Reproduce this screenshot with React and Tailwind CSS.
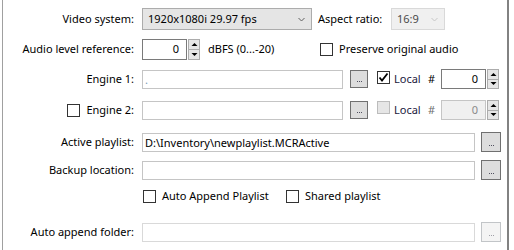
import React from "react";

const font = { fontFamily: '"Noto Sans", "Liberation Sans", sans-serif' };

function Label({ children, className = "" }) {
  return (
    <div className={`w-[132px] shrink-0 flex items-center justify-end pr-[1px] ${className}`}>
      {children}
    </div>
  );
}

function Check({ checked, disabled }) {
  return (
    <span
      className={`inline-flex w-[13px] h-[13px] shrink-0 items-center justify-center border ${
        disabled ? "bg-[#e6e6e6] border-[#bcbcbc]" : "bg-white border-[#333333]"
      }`}
    >
      {checked && (
        <svg width="11" height="11" viewBox="0 0 11 11">
          <path d="M1.5 5.5 L4 8.5 L9.5 1.5" fill="none" stroke="#000" strokeWidth="1.8" />
        </svg>
      )}
    </span>
  );
}

function TextBox({ w, value, muted, disabled }) {
  return (
    <div
      className={`h-[19px] border flex items-center px-[2px] leading-none ${
        disabled ? "border-[#d9d9d9]" : "border-[#c5c5c5]"
      } ${muted ? "text-[#7a9bb5]" : "text-black"}`}
      style={{ width: w }}
    >
      {value}
    </div>
  );
}

function Dots({ disabled, big }) {
  const dot = disabled ? "bg-[#a0a0a8]" : "bg-[#505060]";
  return (
    <div
      className={`shrink-0 flex items-end justify-center gap-[1px] pb-[5px] border ${
        big ? "w-[20px] h-[20px]" : "w-[18px] h-[18px]"
      } ${disabled ? "bg-[#f4f4f4] border-[#c2c5c8]" : "bg-[#dddddd] border-[#707070]"}`}
    >
      <span className={`w-[1px] h-[1px] ${dot}`} />
      <span className={`w-[1px] h-[1px] ${dot}`} />
      <span className={`w-[1px] h-[1px] ${dot}`} />
    </div>
  );
}

function Arrow({ up }) {
  return (
    <svg width="7" height="5" viewBox="0 0 7 5">
      {up ? <path d="M0.5 4 L3.5 1 L6.5 4 Z" fill="#000" /> : <path d="M0.5 1 L3.5 4 L6.5 1 Z" fill="#000" />}
    </svg>
  );
}

function Spin({ value, textW, disabled, h = 21 }) {
  return (
    <div className="flex" style={{ height: h }}>
      <div
        className={`flex items-center justify-end pr-[7px] border ${
          disabled ? "bg-[#f0f0f0] border-[#c5c5c5] text-[#8a8a8a]" : "bg-white border-[#7a7a7a] text-black"
        }`}
        style={{ width: textW }}
      >
        {value}
      </div>
      <div className="flex flex-col w-[12px] ml-[1px]">
        <div className="flex-1 flex items-center justify-center bg-[#e6e6e6] border border-[#acacac]">
          <Arrow up />
        </div>
        <div className="flex-1 flex items-center justify-center bg-[#e6e6e6] border border-[#acacac] border-t-0">
          <Arrow />
        </div>
      </div>
    </div>
  );
}

function Combo({ w, value, disabled }) {
  return (
    <div
      className={`h-[22px] flex items-center border pl-[5px] pr-[6px] ${
        disabled ? "bg-[#f0f0f0] border-[#d9d9d9] text-[#4a4a4a]" : "bg-[#e5e5e5] border-[#acacac] text-black"
      }`}
      style={{ width: w }}
    >
      <span className="flex-1">{value}</span>
      <svg width="7" height="5" viewBox="0 0 7 5">
        <path d="M0.5 1 L3.5 4 L6.5 1" fill="none" stroke={disabled ? "#c6c6c6" : "#606060"} strokeWidth="1" />
      </svg>
    </div>
  );
}

export default function App() {
  return (
    <div className="w-[514px] h-[250px] bg-white text-[11px] text-black overflow-hidden" style={font}>
      <div className="ml-[2px] w-[507px] h-[250px] border-l border-[#a0a0a0] border-r-2 border-r-[#828282] flex flex-col pt-[8px]">
        {/* video system */}
        <div className="flex h-[22px] items-center">
          <Label>Video system:</Label>
          <div className="ml-[7px]">
            <Combo w={170} value="1920x1080i 29.97 fps" />
          </div>
          <span className="ml-[6px] w-[73px]">Aspect ratio:</span>
          <Combo w={54} value="16:9" disabled />
        </div>

        {/* audio */}
        <div className="flex h-[22px] items-center mt-[8px]">
          <Label>Audio level reference:</Label>
          <div className="ml-[7px]">
            <Spin value="0" textW={45} />
          </div>
          <span className="ml-[8px] w-[112px]">dBFS (0...-20)</span>
          <Check />
          <span className="ml-[6px]">Preserve original audio</span>
        </div>

        {/* engine 1 */}
        <div className="flex h-[20px] items-center mt-[9px]">
          <Label>Engine 1:</Label>
          <div className="ml-[7px]">
            <TextBox w={201} value="." muted />
          </div>
          <div className="ml-[7px]">
            <Dots />
          </div>
          <div className="ml-[9px]">
            <Check checked />
          </div>
          <span className="ml-[4px] w-[34px] text-[#1a1a40]">Local</span>
          <span className="w-[13px]">#</span>
          <Spin value="0" textW={45} h={20} />
        </div>

        {/* engine 2 */}
        <div className="flex h-[20px] items-center mt-[11px]">
          <Label className="gap-[6px]">
            <Check />
            <span>Engine 2:</span>
          </Label>
          <div className="ml-[7px]">
            <TextBox w={201} />
          </div>
          <div className="ml-[7px]">
            <Dots />
          </div>
          <div className="ml-[9px]">
            <Check disabled />
          </div>
          <span className="ml-[4px] w-[34px] text-[#1a1a40]">Local</span>
          <span className="w-[13px] text-[#6d6d6d]">#</span>
          <Spin value="0" textW={45} h={20} disabled />
        </div>

        {/* active playlist */}
        <div className="flex h-[20px] items-center mt-[12px]">
          <Label>Active playlist:</Label>
          <div className="ml-[7px]">
            <TextBox w={333} value="D:\Inventory\newplaylist.MCRActive" />
          </div>
          <div className="ml-[6px]">
            <Dots big />
          </div>
        </div>

        {/* backup */}
        <div className="flex h-[20px] items-center mt-[8px]">
          <Label>Backup location:</Label>
          <div className="ml-[7px]">
            <TextBox w={333} />
          </div>
          <div className="ml-[6px]">
            <Dots big />
          </div>
        </div>

        {/* checkboxes */}
        <div className="flex h-[20px] items-center mt-[6px]">
          <div className="w-[140px] shrink-0" />
          <Check />
          <span className="ml-[6px] w-[124px]">Auto Append Playlist</span>
          <Check />
          <span className="ml-[6px]">Shared playlist</span>
        </div>

        {/* auto append folder */}
        <div className="flex h-[20px] items-center mt-[16px]">
          <Label>Auto append folder:</Label>
          <div className="ml-[7px]">
            <TextBox w={333} disabled />
          </div>
          <div className="ml-[6px]">
            <Dots big disabled />
          </div>
        </div>
      </div>
    </div>
  );
}
